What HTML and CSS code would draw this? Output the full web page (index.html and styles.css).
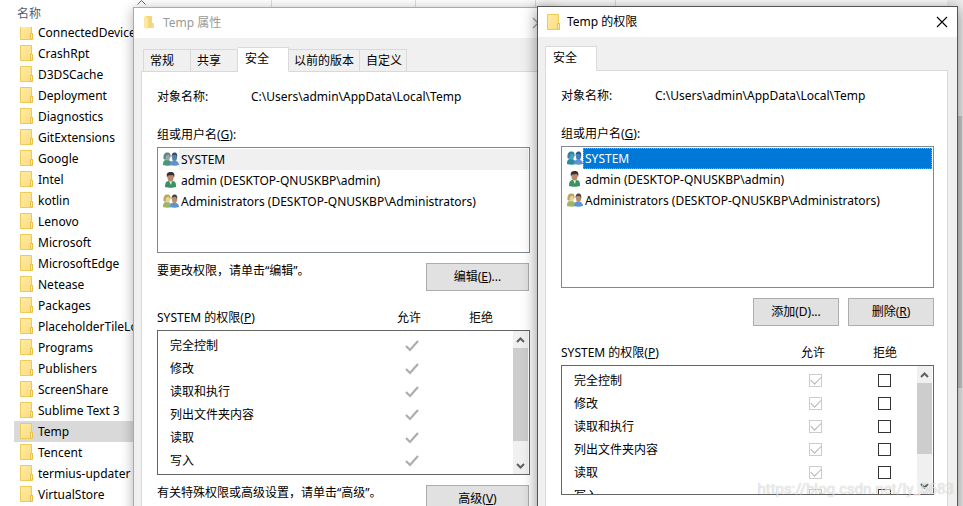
FILE: index.html
```html
<!DOCTYPE html>
<html lang="zh-CN">
<head>
<meta charset="utf-8">
<title>Temp 的权限</title>
<link rel="stylesheet" href="styles.css">
</head>
<body>
<svg width="0" height="0" class="defs" aria-hidden="true">
  <defs>
    <linearGradient id="paper" x1="0" y1="0" x2="1" y2="1"><stop offset="0" stop-color="#ffeba6"/><stop offset="1" stop-color="#fcdc7c"/></linearGradient>
    <symbol id="folder" viewBox="0 0 14 16">
      <path d="M.5.5h11v9h1v6H.5z" fill="url(#paper)" stroke="#eecb55"/>
      <path d="M10.500 15v-5.500h2V15z" fill="#fff0b4" stroke="#e9c14a"/>
    </symbol>
    <symbol id="folder-open" viewBox="0 0 14 16">
      <path d="M3 1h6v9h2v3H3z" fill="#f5d67b"/>
      <path d="M1 1l4 2v11l-4-1z" fill="#fbe7a6"/>
      <path d="M9 8h2v5H9z" fill="#f8dc8c"/>
    </symbol>
    <symbol id="person" viewBox="0 0 16 16">
      <path d="M2 15c0-4 1-6 4-6h3c4 0 4 3 4 6-3 1-8 1-11 0z" fill="#3b9166"/>
      <path d="M6 9h3l-1 4z" fill="#e8f2ea"/>
      <ellipse cx="7.500" cy="5.500" rx="3" ry="4" fill="#b88969"/>
      <path d="M4 5.500C3 1 5 0 8 0s4 2 3 6l-1-3-5 .5z" fill="#35302c"/>
    </symbol>
    <symbol id="pair" viewBox="0 0 16 14">
      <path d="M0 13c0-4 1-5 4-5s5 2 5 5c-3 1-6 1-9 0z" fill="var(--back-body)"/>
      <ellipse cx="4.500" cy="5" rx="2.500" ry="3.500" fill="var(--back-face)"/>
      <path d="M.5 7C0 2 2 .5 4.500.5S8 2 7.500 6L5.500 2.500 3 4 2.500 8z" fill="var(--back-hair)"/>
      <path d="M7 13c0-3 1-4.500 4-4.500s5 1.500 5 4.500c-3 1-6 1-9 0z" fill="#5c93d2"/>
      <ellipse cx="11.500" cy="5.500" rx="2.500" ry="3.500" fill="var(--front-face)"/>
      <path d="M8.500 5c0-3 1-4.500 3-4.500S15 2 14 6l-1-3-3 0z" fill="var(--front-hair)"/>
    </symbol>
    <symbol id="close" viewBox="0 0 12 12"><path d="M1 1l10 10M11 1L1 11" fill="none" stroke="currentColor" stroke-width="1.100"/></symbol>
    <symbol id="up" viewBox="0 0 9 6"><path d="M1 5l3.500-3.500L8 5" fill="none" stroke="currentColor" stroke-width="2"/></symbol>
    <symbol id="down" viewBox="0 0 9 6"><path d="M1 1l3.500 3.500L8 1" fill="none" stroke="currentColor" stroke-width="2"/></symbol>
    <symbol id="tick" viewBox="0 0 14 12"><path d="M1 6l4 4 8-9" fill="none" stroke="#adadad" stroke-width="2.200"/></symbol>
  </defs>
</svg>
<main class="desktop">
  <section class="explorer">
    <div class="columns">
      <span class="column">名称</span><span class="sort"><svg width="9" height="5" viewBox="0 0 9 5"><path d="M.5 4.500l4-4 4 4" fill="none" stroke="#666"/></svg></span>
      <i class="rule rule-a"></i><i class="rule rule-b"></i><i class="rule rule-c"></i><i class="rule rule-d"></i>
    </div>
    <nav class="files">
      <a href="#"><svg class="folder"><use href="#folder"/></svg>ConnectedDevicesPlatform</a>
      <a href="#"><svg class="folder"><use href="#folder"/></svg>CrashRpt</a>
      <a href="#"><svg class="folder"><use href="#folder"/></svg>D3DSCache</a>
      <a href="#"><svg class="folder"><use href="#folder"/></svg>Deployment</a>
      <a href="#"><svg class="folder"><use href="#folder"/></svg>Diagnostics</a>
      <a href="#"><svg class="folder"><use href="#folder"/></svg>GitExtensions</a>
      <a href="#"><svg class="folder"><use href="#folder"/></svg>Google</a>
      <a href="#"><svg class="folder"><use href="#folder"/></svg>Intel</a>
      <a href="#"><svg class="folder"><use href="#folder"/></svg>kotlin</a>
      <a href="#"><svg class="folder"><use href="#folder"/></svg>Lenovo</a>
      <a href="#"><svg class="folder"><use href="#folder"/></svg>Microsoft</a>
      <a href="#"><svg class="folder"><use href="#folder"/></svg>MicrosoftEdge</a>
      <a href="#"><svg class="folder"><use href="#folder"/></svg>Netease</a>
      <a href="#"><svg class="folder"><use href="#folder"/></svg>Packages</a>
      <a href="#"><svg class="folder"><use href="#folder"/></svg>PlaceholderTileLogoFolder</a>
      <a href="#"><svg class="folder"><use href="#folder"/></svg>Programs</a>
      <a href="#"><svg class="folder"><use href="#folder"/></svg>Publishers</a>
      <a href="#"><svg class="folder"><use href="#folder"/></svg>ScreenShare</a>
      <a href="#"><svg class="folder"><use href="#folder"/></svg>Sublime Text 3</a>
      <a href="#" class="current"><svg class="folder"><use href="#folder"/></svg>Temp</a>
      <a href="#"><svg class="folder"><use href="#folder"/></svg>Tencent</a>
      <a href="#"><svg class="folder"><use href="#folder"/></svg>termius-updater</a>
      <a href="#"><svg class="folder"><use href="#folder"/></svg>VirtualStore</a>
    </nav>
  </section>
  <div class="page-scroll"><div class="page-thumb"></div></div>

  <section class="window properties">
    <header class="titlebar"><svg class="folder"><use href="#folder-open"/></svg><h1>Temp 属性</h1><button class="close" aria-label="关闭"><svg><use href="#close"/></svg></button></header>
    <div class="client">
      <div class="tabs">
        <button class="tab">常规</button><button class="tab">共享</button><button class="tab active">安全</button><button class="tab wide">以前的版本</button><button class="tab snug">自定义</button>
      </div>
      <div class="panel">
        <dl class="object"><dt>对象名称:</dt><dd>C:\Users\admin\AppData\Local\Temp</dd></dl>
        <h2 class="caption">组或用户名(<u>G</u>):</h2>
        <ul class="users short">
          <li class="system selected"><svg class="pair"><use href="#pair"/></svg><span>SYSTEM</span></li>
          <li><svg class="person"><use href="#person"/></svg><span>admin (DESKTOP-QNUSKBP\admin)</span></li>
          <li><svg class="pair"><use href="#pair"/></svg><span>Administrators (DESKTOP-QNUSKBP\Administrators)</span></li>
        </ul>
        <div class="action"><p>要更改权限，请单击“编辑”。</p><button class="push long">编辑(<u>E</u>)...</button></div>
        <div class="heads"><h2>SYSTEM 的权限(<u>P</u>)</h2><span>允许</span><span>拒绝</span></div>
        <div class="perms tall">
          <div class="rows"><table>
            <tr><th scope="row">完全控制</th><td class="allow"><svg class="tick"><use href="#tick"/></svg></td><td class="deny"></td></tr>
            <tr><th scope="row">修改</th><td class="allow"><svg class="tick"><use href="#tick"/></svg></td><td class="deny"></td></tr>
            <tr><th scope="row">读取和执行</th><td class="allow"><svg class="tick"><use href="#tick"/></svg></td><td class="deny"></td></tr>
            <tr><th scope="row">列出文件夹内容</th><td class="allow"><svg class="tick"><use href="#tick"/></svg></td><td class="deny"></td></tr>
            <tr><th scope="row">读取</th><td class="allow"><svg class="tick"><use href="#tick"/></svg></td><td class="deny"></td></tr>
            <tr><th scope="row">写入</th><td class="allow"><svg class="tick"><use href="#tick"/></svg></td><td class="deny"></td></tr>
          </table></div>
          <div class="scroll"><button aria-label="向上"><svg><use href="#up"/></svg></button><div class="track"><div class="thumb"></div></div><button aria-label="向下"><svg><use href="#down"/></svg></button></div>
        </div>
        <div class="action"><p>有关特殊权限或高级设置，请单击“高级”。</p><button class="push long">高级(<u>V</u>)</button></div>
      </div>
    </div>
  </section>

  <section class="window permissions">
    <header class="titlebar"><svg class="folder"><use href="#folder"/></svg><h1>Temp 的权限</h1><button class="close" aria-label="关闭"><svg><use href="#close"/></svg></button></header>
    <div class="client">
      <div class="tabs"><button class="tab active">安全</button></div>
      <div class="panel">
        <dl class="object"><dt>对象名称:</dt><dd>C:\Users\admin\AppData\Local\Temp</dd></dl>
        <h2 class="caption">组或用户名(<u>G</u>):</h2>
        <ul class="users">
          <li class="system selected focused"><svg class="pair"><use href="#pair"/></svg><span>SYSTEM</span></li>
          <li><svg class="person"><use href="#person"/></svg><span>admin (DESKTOP-QNUSKBP\admin)</span></li>
          <li><svg class="pair"><use href="#pair"/></svg><span>Administrators (DESKTOP-QNUSKBP\Administrators)</span></li>
        </ul>
        <div class="action end"><button class="push">添加(D)...</button><button class="push">删除(<u>R</u>)</button></div>
        <div class="heads"><h2>SYSTEM 的权限(<u>P</u>)</h2><span>允许</span><span>拒绝</span></div>
        <div class="perms">
          <div class="rows"><table>
            <tr><th scope="row">完全控制</th><td class="allow"><input type="checkbox" aria-label="允许完全控制" checked disabled></td><td class="deny"><input type="checkbox" aria-label="拒绝完全控制"></td></tr>
            <tr><th scope="row">修改</th><td class="allow"><input type="checkbox" aria-label="允许修改" checked disabled></td><td class="deny"><input type="checkbox" aria-label="拒绝修改"></td></tr>
            <tr><th scope="row">读取和执行</th><td class="allow"><input type="checkbox" aria-label="允许读取和执行" checked disabled></td><td class="deny"><input type="checkbox" aria-label="拒绝读取和执行"></td></tr>
            <tr><th scope="row">列出文件夹内容</th><td class="allow"><input type="checkbox" aria-label="允许列出文件夹内容" checked disabled></td><td class="deny"><input type="checkbox" aria-label="拒绝列出文件夹内容"></td></tr>
            <tr><th scope="row">读取</th><td class="allow"><input type="checkbox" aria-label="允许读取" checked disabled></td><td class="deny"><input type="checkbox" aria-label="拒绝读取"></td></tr>
            <tr><th scope="row">写入</th><td class="allow"><input type="checkbox" aria-label="允许写入" checked disabled></td><td class="deny"><input type="checkbox" aria-label="拒绝写入"></td></tr>
          </table></div>
          <div class="scroll"><button aria-label="向上"><svg><use href="#up"/></svg></button><div class="track"><div class="thumb"></div></div><button aria-label="向下"><svg><use href="#down"/></svg></button></div>
        </div>
      </div>
    </div>
  </section>
  <div class="watermark">https://blog.csdn.net/ly_5683</div>
</main>
</body>
</html>
```
FILE: styles.css
```css
* { box-sizing: border-box; }
body { margin: 0; background: #fff; color: #000; font: 12px/20px "Noto Sans", "Noto Sans CJK SC", sans-serif; }
h1, h2, p, dl, dd, ul { margin: 0; padding: 0; font-size: 12px; font-weight: 400; }
button { margin: 0; padding: 0; border: 0; background: none; color: inherit; font: inherit; }
svg { display: block; flex: none; }
u { text-underline-offset: 1px; }
.defs { position: absolute; }
.desktop { position: relative; height: 100vh; overflow: hidden; }

/* File list behind the dialogs */
.explorer { padding-left: 14px; }
.columns { display: flex; height: 27px; }
.column { padding: 4px 0 0 3px; color: #4c607a; width: 123px; }
.sort { width: 134px; }
.rule { height: 24px; border-left: 1px solid #dedede; }
.rule-a { width: 144px; }
.rule-b { width: 120px; }
.rule-c { width: 80px; }
.files { overflow: hidden; }
.files a { display: flex; align-items: center; gap: 4px; height: 21px; padding-left: 6px; color: #000; text-decoration: none; white-space: nowrap; }
.files a:first-child { margin-top: -5px; }
.files .folder { margin-bottom: 2px; }
.files .current { background: #d9d9d9; }
.folder { width: 14px; height: 16px; }
.page-scroll { position: absolute; top: 0; right: 0; bottom: 0; width: 16px; padding: 116px 1px 0 0; background: #f0f0f0; }
.page-thumb { height: 272px; background: #cdcdcd; }

/* Dialog windows */
.window { position: absolute; bottom: -30px; width: 421px; overflow: hidden; display: flex; flex-direction: column; background: #f0f0f0; border: 1px solid #555; box-shadow: 0 2px 14px rgba(0, 0, 0, .45); }
.properties { left: 133px; top: 7px; border-color: #aaa; box-shadow: 0 2px 12px rgba(0, 0, 0, .3); }
.permissions { left: 537px; top: 6px; }
.titlebar { display: flex; align-items: center; gap: 6px; height: 30px; flex: none; padding: 0 9px; background: #fff; }
.titlebar h1 { flex: 1; }
.properties .titlebar { color: #999; }
.close svg { width: 12px; height: 12px; }
.client { flex: 1; display: flex; flex-direction: column; padding: 9px 9px 0 7px; }
.tabs { display: flex; align-items: flex-end; height: 25px; margin-bottom: -1px; position: relative; }
.properties .tabs { padding-left: 2px; }
.tab { height: 23px; padding: 0 16px 0 6px; border: 1px solid #d9d9d9; border-left-width: 0; text-align: left; white-space: nowrap; }
.tab:first-child { border-left-width: 1px; }
.tab.wide { padding: 0 5px; }
.tab.snug { padding: 0 4px 0 6px; }
.tab.active { height: 25px; padding: 0 19px 1px 7px; background: #fff; border-bottom-color: #fff; }
.panel { flex: 1; padding: 15px 13px 0 15px; background: #fff; border: 1px solid #d9d9d9; }
.object { display: grid; grid-template-columns: 94px 1fr; margin-bottom: 18px; }
.users { height: 142px; margin-top: 2px; padding: 1px; border: 1px solid #828790; list-style: none; }
.users.short { height: 106px; }
.users li { display: flex; align-items: center; height: 21px; padding-left: 4px; white-space: nowrap; }
.users span { flex: 1; padding-left: 2px; line-height: 21px; }
.selected span { background: #f0f0f0; }
.focused span { background: #0078d7; color: #fff; outline: 1px dotted #ff8728; outline-offset: -1px; }
.pair { width: 16px; height: 14px; --back-body: #9bb765; --back-face: #ecd0a0; --back-hair: #b9a85a; --front-face: #bb8b70; --front-hair: #4b433e; }
.users svg { margin-bottom: 2px; }
.person { width: 16px; height: 16px; }
.system .pair { --back-body: #479775; --back-face: #91aaa7; --back-hair: #668683; --front-face: #5b80a8; --front-hair: #304f73; }
.focused .pair { --back-body: #298ba3; --back-face: #4c9fc4; --back-hair: #347f9c; --front-face: #3d7fbd; --front-hair: #20588f; }
.action { display: flex; justify-content: space-between; align-items: flex-start; height: 28px; margin-top: 10px; padding-right: 1px; }
.action p { line-height: 16px; }
.action.end { justify-content: flex-end; gap: 9px; padding-right: 0; }
.push { width: 86px; height: 28px; border: 1px solid #adadad; background: #e1e1e1; }
.push.long { width: 103px; }
.heads { display: flex; margin: 17px 0 2px; padding-right: 13px; }
.heads h2 { flex: 1; }
.heads span { width: 72px; text-align: center; }
.perms { display: flex; height: 130px; padding-right: 1px; border: 1px solid #646464; overflow: hidden; }
.perms.tall { height: 145px; }
.rows { flex: 1; overflow: hidden; }
table { width: 100%; margin-top: 3px; border-collapse: collapse; table-layout: fixed; }
tr { height: 23px; }
th { padding: 0 0 0 12px; font-weight: 400; text-align: left; }
td { padding: 0; text-align: center; }
.allow { width: 73px; }
.deny { width: 65px; }
.tick { width: 14px; height: 12px; margin: 0 auto; }
input { appearance: none; display: block; width: 13px; height: 13px; margin: 0 auto; border: 1px solid #333; background: #fff; }
input:checked { border-color: #ccc; display: grid; place-items: center; }
input:checked::after { content: ""; width: 9px; height: 5px; margin-top: -3px; border: solid #b4b4b4; border-width: 0 0 1px 1px; transform: rotate(-45deg); }
.scroll { display: flex; flex-direction: column; width: 15px; background: #f0f0f0; color: #606060; }
.scroll button { display: grid; place-items: center; height: 17px; }
.scroll svg { width: 9px; height: 6px; }
.track { flex: 1; }
.thumb { height: 76%; background: #cdcdcd; }
.tall .thumb { height: 85%; }
.watermark { position: absolute; right: 9px; bottom: 7px; color: rgba(255, 255, 255, .7); font: 15px/20px Roboto, sans-serif; text-shadow: 0 0 1px rgba(0, 0, 0, .3); }
```
